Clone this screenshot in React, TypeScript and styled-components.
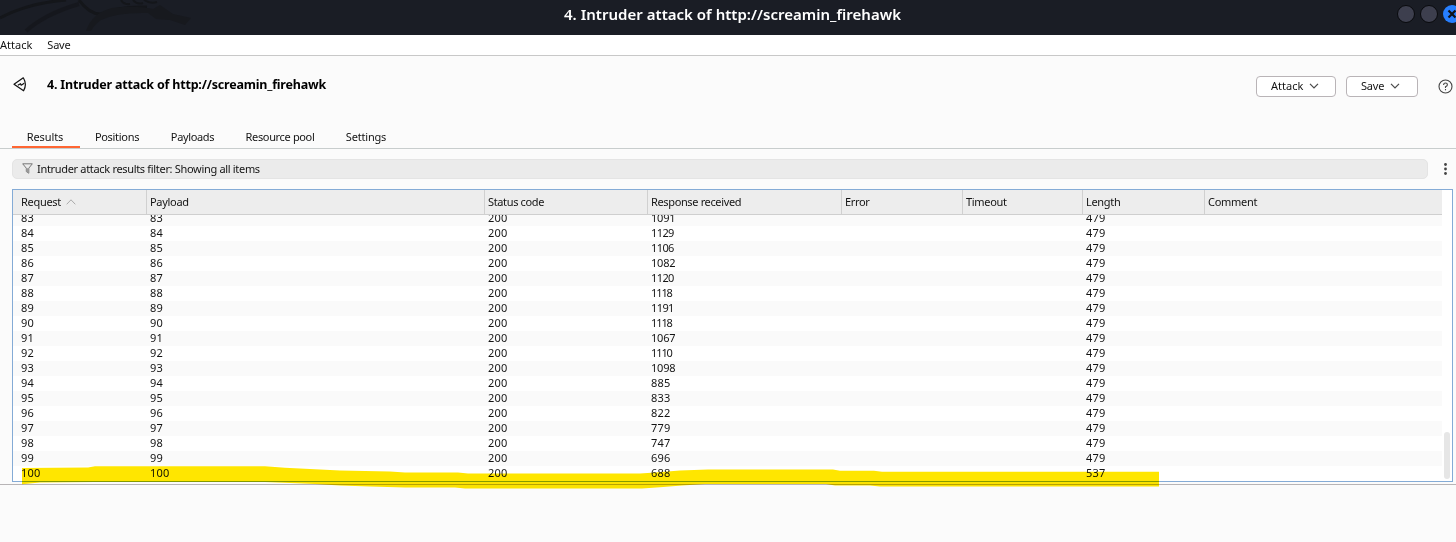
import React from "react";
import styled, { createGlobalStyle } from "styled-components";

const Global = createGlobalStyle`
  *{box-sizing:border-box}
  body{margin:0;background:#fbfbfb;font-family:"Noto Sans",sans-serif;font-size:11px;color:#141414;overflow:hidden}
`;
const Window = styled.div`position:relative;width:1456px;height:542px;display:flex;flex-direction:column;overflow:hidden;`;
const TitleBar = styled.header`position:relative;height:35px;flex:none;background:#1a1d25;display:flex;align-items:flex-start;justify-content:flex-end;overflow:hidden;`;
const Dragon = styled.svg`position:absolute;left:0;top:0;`;
const WindowTitle = styled.div`position:absolute;left:564px;top:4px;line-height:20px;font-size:15px;font-weight:600;color:#fff;white-space:nowrap;`;
const Label = styled.span<{ $track?: number }>`white-space:nowrap;letter-spacing:${p => p.$track ?? 0}px;`;
const MenuBar = styled.nav`height:21px;flex:none;background:#fff;border-bottom:1px solid #c8c8c8;display:flex;gap:15px;line-height:20px;`;
const Heading = styled.div`height:61px;flex:none;display:flex;align-items:center;padding-left:13px;`;
const Brand = styled.div`display:flex;align-items:center;gap:20px;margin-right:auto;padding-bottom:4px;`;
const Title = styled.h1`margin:0;padding-bottom:1px;font-size:12.5px;line-height:17px;font-weight:700;color:#000;white-space:nowrap;`;
const DropButton = styled.button<{ $w: number }>`width:${p => p.$w}px;height:21px;padding:0 0 1px 14px;margin-right:10px;border:1px solid #b9b4b7;border-radius:4px;background:#fff;font:inherit;color:inherit;display:flex;align-items:center;gap:6px;line-height:18px;`;
const Help = styled.svg`margin:0 3px 0 10px;flex:none;`;
const Tabs = styled.div`height:32px;flex:none;border-bottom:1px solid #c8cdcd;display:flex;padding-left:12px;`;
const Tab = styled.div<{ $w: number; $on?: boolean }>`width:${p => p.$w}px;height:31px;line-height:16px;padding:12px 2px 0 0;text-align:center;border-bottom:2px solid ${p => (p.$on ? "#ff6633" : "transparent")};`;
const FilterRow = styled.div`display:flex;align-items:center;height:20px;margin:10px 0;padding-left:12px;flex:none;`;
const Filter = styled.div`width:1416px;height:20px;border:1px solid #e4e4e4;border-radius:5px;background:#ebebeb;display:flex;align-items:center;padding:0 0 1px 9px;gap:4px;line-height:17px;`;
const Kebab = styled.svg`margin:0 0 1px 15px;`;
const Table = styled.section`width:1441px;height:293px;flex:none;margin-left:12px;border:1px solid #84abd6;background:#fff;display:flex;`;
const Grid = styled.div`width:1429px;overflow:hidden;`;
const cols = "134px 338px 163px 194px 121px 120px 122px 1fr";
const Head = styled.div`height:25px;display:grid;grid-template-columns:${cols};background:#ededed;border-bottom:1px solid #cfcfcf;line-height:24px;`;
const HeadCell = styled.div`border-right:1px solid #d0d0d0;padding-left:3px;&:first-child{padding-left:8px}&:last-child{border:0}display:flex;align-items:center;gap:5px;`;
const Body = styled.div`height:266px;overflow:hidden;display:flex;flex-direction:column;justify-content:flex-end;`;
const Row = styled.div<{ $alt: boolean }>`height:15px;flex:none;display:grid;grid-template-columns:${cols};background:${p => (p.$alt ? "#fafafa" : "#fff")};line-height:14px;`;
const Cell = styled.div`padding-left:3px;&:first-child{padding-left:8px}`;
const ScrollTrack = styled.div`flex:1;display:flex;justify-content:flex-end;align-items:flex-end;padding:0 2px 2px 0;`;
const Thumb = styled.div`width:6px;height:47px;border-radius:3px;background:#e6e6e6;`;
const Bottom = styled.div`margin-top:2px;border-top:1px solid #b7b4b6;flex:1;`;
const Marker = styled.svg`position:absolute;left:0;top:460px;mix-blend-mode:multiply;pointer-events:none;`;

const received = [1091, 1129, 1106, 1082, 1120, 1118, 1191, 1118, 1067, 1110, 1098, 885, 833, 822, 779, 747, 696, 688];
const heads: [string, number][] = [["Request", -0.3], ["Payload", -0.3], ["Status code", -0.36], ["Response received", -0.36], ["Error", -0.35], ["Timeout", -0.3], ["Length", -0.3], ["Comment", -0.3]];
const tabs: [string, number, number][] = [["Results", 68, -0.1], ["Positions", 76, -0.3], ["Payloads", 75, -0.35], ["Resource pool", 100, -0.35], ["Settings", 72, -0.2]];

// Runs of narrow ones are set tighter than the other figures.
const tracking = (v: string) => {
  if (v.startsWith("111")) return -1.1;
  if (v.startsWith("11")) return -0.6;
  return v.length === 4 ? -0.2 : 0.2;
};

const Chevron = () => (
  <svg width="10" height="6" viewBox="0 0 10 6"><path d="M1 .8 5 5 9 .8" fill="none" stroke="#4a4a4a" strokeWidth="1.2" /></svg>
);

export default function App() {
  return (
    <Window>
      <Global />
      <TitleBar>
        <Dragon width="200" height="35">
          <g fill="none" stroke="#14161a">
            <path d="M0 18Q28 3 66 0" strokeWidth="3" />
            <path d="M26 31Q45 14 79 4" strokeWidth="4" opacity=".7" />
            <path d="M79 0Q90 15 102 14Q120 6 147 7" strokeWidth="3" />
            <path d="M121 0q3 5 9 4M133 0q4 5 10 3M144 0q6 4 13 2" strokeWidth="2" />
          </g>
          <path d="M86 31Q92 13 112 8Q136 5 153 9L160 5 173 14 191 18 185 25 170 20 156 19 148 13Q117 12 101 20Q94 25 91 31Z" fill="#17191e" />
        </Dragon>
        <WindowTitle><Label $track={0.02}>4. Intruder attack of http://screamin_firehawk</Label></WindowTitle>
        <svg width="60" height="28" viewBox="0 0 60 28">
          <circle cx="10" cy="14" r="8.5" fill="#3d3f4e" stroke="#090a0d" />
          <circle cx="33" cy="14" r="8.5" fill="#3d3f4e" stroke="#090a0d" />
          <circle cx="56" cy="14" r="9" fill="#277fff" />
          <path d="m52.5 10.5 7 7m0-7-7 7" stroke="#101218" strokeWidth="2.2" />
        </svg>
      </TitleBar>
      <MenuBar><Label>Attack</Label><Label $track={-0.2}>Save</Label></MenuBar>
      <Heading>
        <Brand>
          <svg width="14" height="16" viewBox="0 0 14 16" fill="none" stroke="#111" strokeWidth="1.2" strokeLinejoin="round">
            <path d="M1 7.3 10.3 .8Q14.3 7.3 10.6 13.8Z" /><path d="m4.8 8.2 2.700-1.500.7 1.500 3-1.900" />
          </svg>
          <Title><Label $track={-0.19}>4. Intruder attack of http://screamin_firehawk</Label></Title>
        </Brand>
        <DropButton $w={80}><Label>Attack</Label><Chevron /></DropButton>
        <DropButton $w={72}><Label $track={-0.2}>Save</Label><Chevron /></DropButton>
        <Help width="15" height="15" viewBox="0 0 15 15" fill="none" stroke="#444" strokeWidth="1.1">
          <circle cx="7.5" cy="7.5" r="6.5" /><path d="M5.6 6q0-2 1.9-2t1.9 1.7Q9.4 7 7.5 7.7V9" /><path d="M7.5 10v1.3" />
        </Help>
      </Heading>
      <Tabs>{tabs.map(([t, w, s], i) => <Tab key={t} $w={w} $on={i === 0}><Label $track={s}>{t}</Label></Tab>)}</Tabs>
      <FilterRow>
        <Filter>
          <svg width="11" height="11" viewBox="0 0 11 11"><path d="M.7.8h9.6L6.8 5.2v5L4.3 8.6V5.2Z" fill="none" stroke="#777" /><path d="M4.3 5.2h2.5v5L4.3 8.6Z" fill="#999" /></svg>
          <Label $track={-0.32}>Intruder attack results filter: Showing all items</Label>
        </Filter>
        <Kebab width="5" height="14" viewBox="0 0 5 14" fill="#444"><circle cx="2.5" cy="2.5" r="1.4" /><circle cx="2.5" cy="7" r="1.4" /><circle cx="2.5" cy="11.5" r="1.4" /></Kebab>
      </FilterRow>
      <Table>
        <Grid>
          <Head>{heads.map(([h, s], i) => (
            <HeadCell key={h}><Label $track={s}>{h}</Label>{i === 0 && <svg width="10" height="6"><path d="M.7 5.3 5 .8l4.300 4.5" fill="none" stroke="#aaa" /></svg>}</HeadCell>
          ))}</Head>
          <Body>{received.map((r, i) => {
            const n = String(83 + i);
            const values = [n, n, "200", String(r), "", "", i === 17 ? "537" : "479", ""];
            return <Row key={i} $alt={i % 2 === 0}>{values.map((v, c) => <Cell key={c}><Label $track={tracking(v)}>{v}</Label></Cell>)}</Row>;
          })}</Body>
        </Grid>
        <ScrollTrack><Thumb /></ScrollTrack>
      </Table>
      <Bottom />
      <Marker width="1170" height="32" viewBox="0 460 1170 32">
        <path fill="#ffe600" d="M22 468 88 467.500 95 466.300H265L285 467.700 310 469 340 470.500 390 471.500 405 472.600H458L468 473.600H640L655 472.500 680 470.500 708 469.600H833L840 470.800H874L882 471.700H1159V486.500H880L870 485.500H835L826 484H705L682 485.500 660 487.200 642 488.500H465L455 487.500H405L370 486.500 340 485.500 315 484 290 483 265 482H95L40 482.500 22 484.300Z" />
      </Marker>
    </Window>
  );
}
